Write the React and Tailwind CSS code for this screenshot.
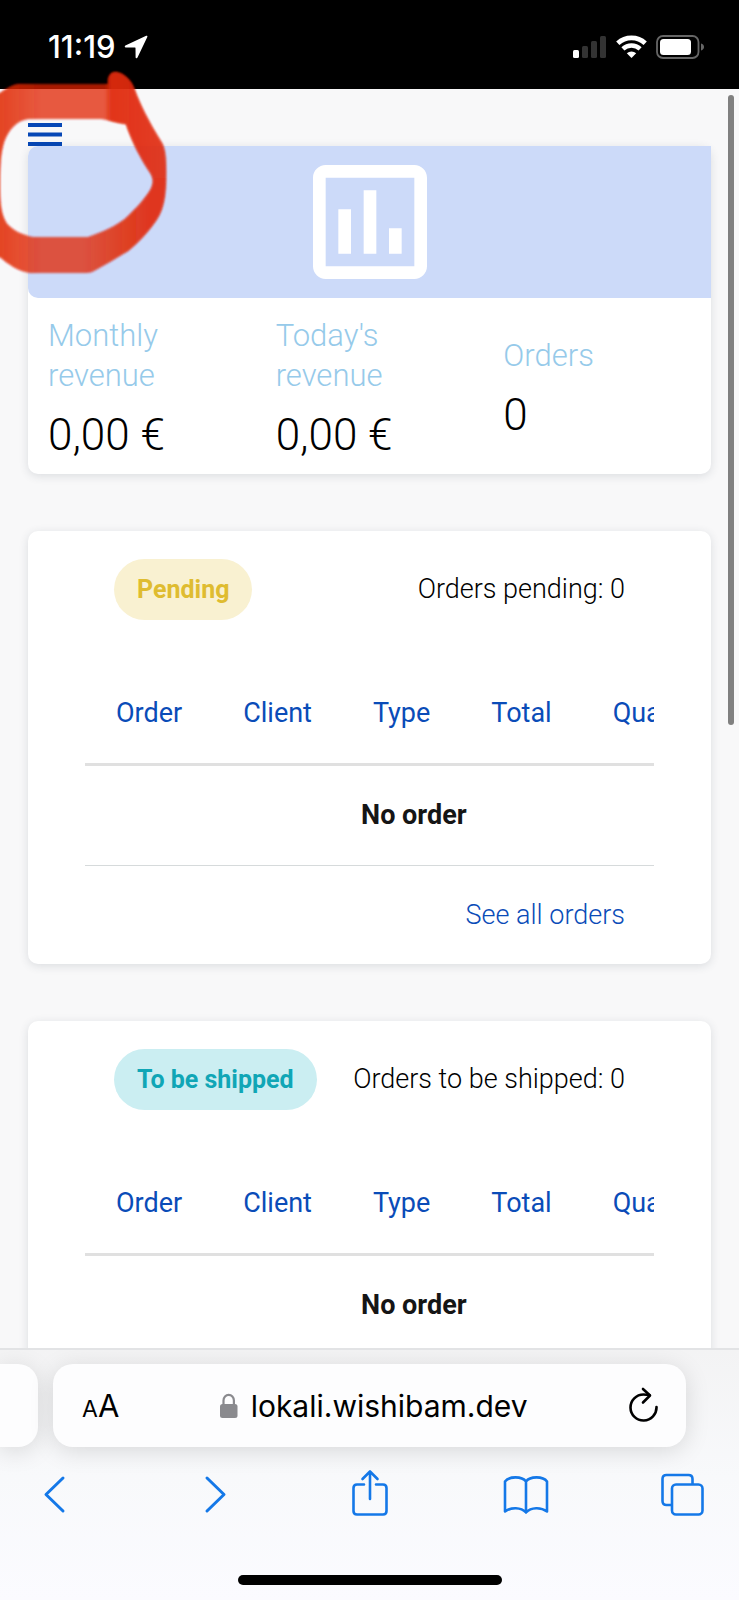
import { MdOutlineAssessment } from 'react-icons/md';

const STATS = [
  { label: 'Monthly revenue', value: '0,00 €' },
  { label: "Today's revenue", value: '0,00 €' },
  { label: 'Orders', value: '0' }
];

const COLUMNS = ['Order', 'Client', 'Type', 'Total', 'Quantity'];

const SECTIONS = [
  { id: 'pending', badge: 'Pending', summary: 'Orders pending: 0', link: 'See all orders', badgeClass: 'bg-[#f9f1d1] text-[#dfbc30]' },
  { id: 'shipping', badge: 'To be shipped', summary: 'Orders to be shipped: 0', badgeClass: 'bg-[#cbeef2] text-[#10a6b6]' }
];

const StatusBar = () => (
  <header className="flex h-[89px] shrink-0 items-center justify-between bg-black pt-1 pr-[34px] pl-12 text-white">
    <div className="flex items-center gap-2">
      <span className="font-['Inter',sans-serif] text-[31px] leading-8 font-medium">11:19</span>
      <svg width="24" height="24" viewBox="0 0 24 24" fill="currentColor" aria-hidden="true">
        <path d="M22.2.8c.9-.4 1.500.3 1.100 1.200L13.500 22.600c-.5 1-1.900.8-1.900-.4l-.1-9.200c0-.3-.1-.5-.5-.5l-9.200-.1c-1.200 0-1.400-1.400-.4-1.900z" />
      </svg>
    </div>
    <div className="flex items-center gap-[9px]">
      <svg width="34" height="24" viewBox="0 0 34 24" aria-hidden="true">
        <rect x="0" y="15" width="6" height="8" rx="1.500" fill="#fff" />
        <rect x="9" y="11" width="6" height="12" rx="1.500" fill="#333" />
        <rect x="18" y="6" width="6" height="17" rx="1.500" fill="#333" />
        <rect x="27" y="1" width="6" height="22" rx="1.500" fill="#333" />
      </svg>
      <svg width="31" height="24" viewBox="0 0 31 24" fill="none" stroke="#fff" aria-hidden="true">
        <path d="M1.800 8.200a20.200 20.200 0 0 1 27.400 0" strokeWidth="4.800" />
        <path d="M6.900 13.800a12.800 12.800 0 0 1 17.200 0" strokeWidth="4.500" />
        <path d="M15.500 23l-4.700-4.800a7 7 0 0 1 9.400 0z" fill="#fff" stroke="none" />
      </svg>
      <svg width="49" height="24" viewBox="0 0 49 24" aria-hidden="true">
        <rect x="1" y="1" width="41.500" height="22" rx="6" fill="none" stroke="#666" strokeWidth="1.800" />
        <rect x="4" y="4" width="31" height="16" rx="3.500" fill="#fff" />
        <path d="M45 8.500c2 .6 3 1.900 3 3.500s-1 2.900-3 3.500z" fill="#666" />
      </svg>
    </div>
  </header>
);

const RevenueCard = () => (
  <section className="rounded-[10px] bg-white shadow-[0_2px_10px_rgba(40,60,70,0.14)]">
    <div className="flex justify-center rounded-l-[10px] bg-[#ccdaf9]">
      <MdOutlineAssessment size={152} color="#fff" />
    </div>
    <dl className="grid grid-cols-3 items-center pt-[18px] pb-[14px]">
      {STATS.map(stat => (
        <div key={stat.label} className="px-5">
          <dt className="w-32 text-[31px] leading-10 font-light text-[#96caea]">{stat.label}</dt>
          <dd className="mt-[14px] text-[44px] leading-[50px] font-light whitespace-nowrap text-black">{stat.value}</dd>
        </div>
      ))}
    </dl>
  </section>
);

const OrdersCard = ({ section }) => (
  <section className="rounded-[10px] bg-white px-[57px] pt-7 shadow-[0_2px_10px_rgba(40,60,70,0.14)]">
    <div className="flex items-center justify-between px-[29px]">
      <h2 className={`rounded-full px-[23px] py-[14px] text-[25px] leading-[33px] font-bold ${section.badgeClass}`}>
        {section.badge}
      </h2>
      <p className="text-[27px] leading-[33px] font-light text-black">{section.summary}</p>
    </div>

    <div className="mt-[43px] overflow-hidden">
      <table className="min-w-full border-separate border-spacing-0">
        <thead>
          <tr>
            {COLUMNS.map(column => (
              <th key={column} className="h-[103px] border-b-3 border-[#e0e0e0] pr-[30px] pl-[31px] text-left text-[27px] font-normal text-[#0a4cb8]">
                {column}
              </th>
            ))}
          </tr>
        </thead>
        <tbody>
          <tr>
            <td colSpan={COLUMNS.length} className="h-[100px] border-b border-[#d6dadb] text-center text-[27px] font-bold text-[#151515]">
              No order
            </td>
          </tr>
        </tbody>
      </table>
    </div>

    <div className="flex h-[98px] items-center justify-end px-[29px]">
      {section.link && (
        <a href="#orders" className="text-[27px] leading-[33px] font-light text-[#0a4cb8]">{section.link}</a>
      )}
    </div>
  </section>
);

const LOOP =
  'M-8 96C0 96 6 86 18 84L108 84C107 76 111 72 116 72C124 73 131 80 134 88C140 105 149 122 160 140C165 147 166 155 166 172C166 195 164 208 157 219C149 231 138 243 128 251C116 258 105 265 94 271Q91 273 86 273L30 273C18 271 8 264 0 257L-8 257ZM28 119C16 121 9 129 4 142C0 155 0 168 0 190C0 207 2 216 7 224C14 231 22 235 33 237L88 237C103 232 116 226 125 219C136 209 146 198 151 189Q155 181 151 174C141 159 132 142 126 124C117 123 109 120 101 119Z';

// Red marker loop drawn around the menu button
const MarkerLoop = () => (
  <svg className="pointer-events-none absolute top-0 left-0" width="180" height="290" viewBox="0 0 180 290" aria-hidden="true">
    <defs>
      <linearGradient id="loopTop" gradientUnits="userSpaceOnUse" x1="0" x2="166" y1="0" y2="0">
        <stop offset="0" stopColor="#e02b0c" stopOpacity="0.45" />
        <stop offset="0.25" stopColor="#e02b0c" stopOpacity="0" />
        <stop offset="0.63" stopColor="#e02b0c" stopOpacity="0" />
        <stop offset="0.67" stopColor="#e02b0c" stopOpacity="0.8" />
        <stop offset="1" stopColor="#e02b0c" stopOpacity="0.6" />
      </linearGradient>
      <linearGradient id="loopBottom" gradientUnits="userSpaceOnUse" x1="0" x2="166" y1="0" y2="0">
        <stop offset="0" stopColor="#e02b0c" stopOpacity="0.45" />
        <stop offset="0.25" stopColor="#e02b0c" stopOpacity="0" />
        <stop offset="0.5" stopColor="#e02b0c" stopOpacity="0" />
        <stop offset="0.9" stopColor="#e02b0c" stopOpacity="0.7" />
      </linearGradient>
      <filter id="loopSoft">
        <feGaussianBlur stdDeviation="0.8" />
      </filter>
      <clipPath id="loopUpper">
        <rect width="180" height="178" />
      </clipPath>
      <clipPath id="loopLower">
        <rect y="178" width="180" height="112" />
      </clipPath>
    </defs>
    <path d={LOOP} fill="#e11f05" fillOpacity="0.74" fillRule="evenodd" filter="url(#loopSoft)" />
    <g clipPath="url(#loopUpper)">
      <path d={LOOP} fill="url(#loopTop)" fillRule="evenodd" filter="url(#loopSoft)" />
    </g>
    <g clipPath="url(#loopLower)">
      <path d={LOOP} fill="url(#loopBottom)" fillRule="evenodd" filter="url(#loopSoft)" />
    </g>
  </svg>
);

const toolButton = 'flex size-11 items-center justify-center';

const BrowserBar = () => (
  <footer className="shrink-0 overflow-hidden border-t-2 border-[#e2e3e5] bg-linear-to-b from-[#f3f3f4] via-[#f8f9fb] to-[#fbfbff] pt-[14px] pb-[15px] font-['Inter',sans-serif]">
    <div className="flex gap-[15px] pr-[53px]">
      <div className="h-[83px] w-[38px] rounded-r-[20px] bg-[#fdfdfe] shadow-[0_4px_24px_rgba(0,0,0,0.13)]"></div>
      <div className="flex h-[83px] flex-1 items-center justify-between rounded-[20px] bg-[#fdfdfe] pr-7 pl-[29px] text-black shadow-[0_4px_24px_rgba(0,0,0,0.13)]">
        <button type="button" aria-label="Page settings" className="flex items-baseline pt-1 leading-10">
          <span className="text-[23px]">A</span>
          <span className="text-[31px]">A</span>
        </button>
        <div className="flex items-center gap-[13px]">
          <svg width="18" height="26" viewBox="0 0 18 26" aria-hidden="true">
            <rect x="0" y="11" width="17.500" height="14" rx="2.500" fill="#8a8a8e" />
            <path d="M3.500 12V7.500a5.200 5.700 0 0 1 10.400 0V12" fill="none" stroke="#8a8a8e" strokeWidth="2.200" />
          </svg>
          <span className="text-[30px] leading-10">lokali.wishibam.dev</span>
        </div>
        <button type="button" aria-label="Reload">
          <svg className="-translate-y-[2px]" width="30" height="36" viewBox="0 0 30 36" fill="none" stroke="#000" strokeWidth="2.600" strokeLinecap="round" strokeLinejoin="round">
            <path d="M28.500 21A13 13 0 1 1 15.500 8.500q3 0 6 .5" />
            <path d="M15 3l7 6.500-7 7" />
          </svg>
        </button>
      </div>
    </div>

    <nav className="mt-[26px] flex items-center justify-between pr-[35px] pl-8 text-[#1478e8]">
      <button type="button" aria-label="Back" className={toolButton}>
        <svg width="44" height="44" viewBox="0 0 44 44" fill="none" stroke="currentColor" strokeWidth="3" strokeLinecap="round" strokeLinejoin="round">
          <path d="M31 5L14 21.500 31 38" />
        </svg>
      </button>
      <button type="button" aria-label="Forward" className={toolButton}>
        <svg width="44" height="44" viewBox="0 0 44 44" fill="none" stroke="currentColor" strokeWidth="3" strokeLinecap="round" strokeLinejoin="round">
          <path d="M18 5l17 16.500L18 38" />
        </svg>
      </button>
      <button type="button" aria-label="Share" className={toolButton}>
        <svg className="overflow-visible" width="44" height="44" viewBox="0 0 44 44" fill="none" stroke="currentColor" strokeWidth="2.600" strokeLinecap="round" strokeLinejoin="round">
          <path d="M18 11.500H11q-3.500 0-3.500 3.500V38q0 3.500 3.500 3.500h26q3.500 0 3.500-3.500V15q0-3.500-3.500-3.500h-7M24 26V-1.500M16.500 6L24-1.500 31.500 6" />
        </svg>
      </button>
      <button type="button" aria-label="Bookmarks" className={toolButton}>
        <svg className="overflow-visible" width="44" height="44" viewBox="0 0 44 44" fill="none" stroke="currentColor" strokeWidth="2.600" strokeLinejoin="round">
          <path d="M23 8.500C19 3 6 3 2 8.500V38.500C8 34 18 34 23 39.500 28 34 38 34 44 38.500V8.500C40 3 27 3 23 8.500zV39" />
        </svg>
      </button>
      <button type="button" aria-label="Tabs" className={toolButton}>
        <svg width="44" height="44" viewBox="0 0 44 44" fill="none" stroke="currentColor" strokeWidth="2.600">
          <path d="M11.500 32H6.500q-4 0-4-4V6q0-4 4-4H28.500q4 0 4 4v5.500" />
          <rect x="12" y="11.500" width="30.500" height="30" rx="4" />
        </svg>
      </button>
    </nav>

    <div className="mx-auto mt-[58px] h-[10px] w-[264px] rounded-full bg-black"></div>
  </footer>
);

const App = () => {
  return (
    <div className="relative flex h-screen flex-col overflow-hidden bg-[#f8f8f9] font-['Roboto',sans-serif]">
      <StatusBar />

      <main className="relative min-h-0 flex-1 overflow-hidden px-7 pt-[34px]">
        <button type="button" aria-label="Open menu" className="block text-[#0647b6]">
          <svg className="block" width="34" height="23" viewBox="0 0 34 23" fill="currentColor">
            <rect y="0" width="34" height="4" />
            <rect y="9.500" width="34" height="4" />
            <rect y="19" width="34" height="4" />
          </svg>
        </button>

        <div className="flex flex-col gap-[57px]">
          <RevenueCard />
          {SECTIONS.map(section => (
            <OrdersCard key={section.id} section={section} />
          ))}
        </div>

        {/* Scroll thumb */}
        <div className="absolute top-[6px] right-[5px] h-1/2 w-[6px] rounded-full bg-[#808080]"></div>
      </main>

      <BrowserBar />
      <MarkerLoop />
    </div>
  );
};

export default App;
